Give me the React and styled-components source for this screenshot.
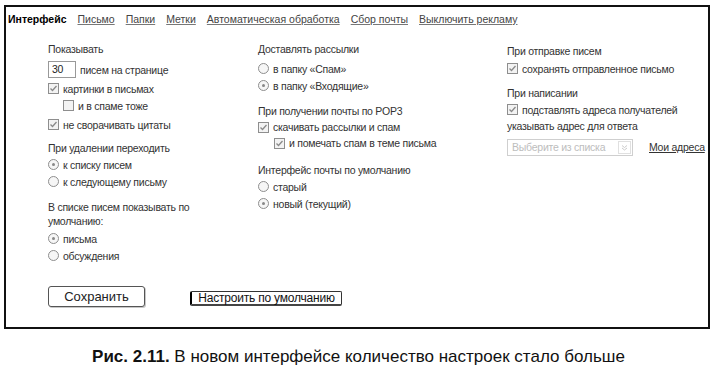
import React from 'react';
import styled, { createGlobalStyle } from 'styled-components';

const Global = createGlobalStyle`
  html, body { margin: 0; padding: 0; background: #fff; }
  body {
    font-family: "Liberation Sans", Arial, sans-serif;
    font-size: 10.5px;
    letter-spacing: -0.25px;
    color: #333;
    width: 717px;
    height: 374px;
    overflow: hidden;
  }
`;

const Frame = styled.div`
  box-sizing: border-box;
  margin: 5px 7px 0 4px;
  height: 324px;
  border: 2px solid #111;
`;

const Tabs = styled.nav`
  display: flex;
  gap: 11px;
  padding: 5px 0 0 2px;
  height: 14px;
  line-height: 14px;
  letter-spacing: 0;
  white-space: nowrap;
`;

const Tab = styled.a`
  color: ${(p) => (p.$active ? '#000' : '#444')};
  font-weight: ${(p) => (p.$active ? 700 : 400)};
  text-decoration: ${(p) => (p.$active ? 'none' : 'underline')};
  text-decoration-color: #777;
  cursor: pointer;
`;

const Columns = styled.div`
  display: grid;
  grid-template-columns: 210px 249px 1fr;
  padding: 16px 0 0 42px;
`;

const Column = styled.div`
  display: flex;
  flex-direction: column;
`;

const Heading = styled.div`
  line-height: ${(p) => p.$lh || 15}px;
  margin-top: ${(p) => p.$mt || 0}px;
  color: #333;
  white-space: nowrap;
`;

const Row = styled.label`
  display: flex;
  align-items: center;
  gap: 4px;
  height: ${(p) => p.$h || 17}px;
  margin-top: ${(p) => p.$mt || 0}px;
  padding-left: ${(p) => p.$indent || 0}px;
  white-space: nowrap;
`;

const Box = styled.span`
  box-sizing: border-box;
  width: 11px;
  height: 11px;
  border: 1px solid #8e8e8e;
  background: #f3f3f3;
  display: inline-flex;
  align-items: center;
  justify-content: center;
  flex: none;
`;

const Round = styled(Box)`
  border-radius: 50%;
  background: #f6f6f6;
  &::after {
    content: '';
    width: 3px;
    height: 3px;
    border-radius: 50%;
    background: ${(p) => (p.$on ? '#888' : 'transparent')};
  }
`;

const Check = ({ on }) => (
  <Box>
    {on && (
      <svg width="9" height="9" viewBox="0 0 9 9">
        <path d="M1.5 4.5 L3.5 6.5 L7.5 2" fill="none" stroke="#8a8a8a" strokeWidth="1.3" />
      </svg>
    )}
  </Box>
);

const InputRow = styled.div`
  display: flex;
  align-items: center;
  gap: 4px;
  height: 19px;
  margin-top: 3px;
  white-space: nowrap;
`;

const NumInput = styled.span`
  box-sizing: border-box;
  width: 28px;
  height: 17px;
  border: 1px solid #999;
  padding-left: 3px;
  line-height: 15px;
  color: #222;
`;

const SelectRow = styled.div`
  display: flex;
  align-items: center;
  gap: 16px;
  margin-top: 4px;
  height: 18px;
  white-space: nowrap;
`;

const Select = styled.div`
  box-sizing: border-box;
  width: 126px;
  height: 17px;
  border: 1px solid #cfcfcf;
  display: flex;
  align-items: center;
  justify-content: space-between;
  padding-left: 4px;
  color: #bdbdbd;
  overflow: hidden;
  white-space: nowrap;
  flex: none;
`;

const SelectArrow = styled.span`
  box-sizing: border-box;
  width: 13px;
  height: 13px;
  margin-right: 1px;
  border: 1px solid #e0e0e0;
  display: inline-flex;
  align-items: center;
  justify-content: center;
  flex: none;
`;

const LinkText = styled.a`
  color: #333;
  text-decoration: underline;
`;

const Buttons = styled.div`
  display: flex;
  align-items: flex-start;
  gap: 45px;
  padding: 22px 0 0 42px;
`;

const SaveButton = styled.button`
  box-sizing: border-box;
  width: 97px;
  height: 21px;
  border: 1px solid #555;
  border-radius: 3px;
  background: #fff;
  font-family: "Liberation Sans", Arial, sans-serif;
  font-size: 13px;
  color: #222;
  padding: 0;
  box-shadow: 1px 1px 0 #c8c8c8;
`;

const DefaultButton = styled.button`
  box-sizing: border-box;
  width: 152px;
  height: 15px;
  margin-top: 5px;
  border: 1px solid #333;
  border-left: 2px solid #000;
  border-bottom: 2px solid #444;
  border-radius: 2px;
  background: #fff;
  font-family: "Liberation Sans", Arial, sans-serif;
  font-size: 12px;
  letter-spacing: -0.2px;
  line-height: 11px;
  color: #111;
  padding: 0;
`;

const Caption = styled.p`
  margin: 18px 0 0;
  text-align: center;
  font-family: "Liberation Sans", Arial, sans-serif;
  font-size: 17px;
  letter-spacing: 0;
  line-height: 20px;
  color: #111;
  b { font-weight: 700; }
`;

export default function App() {
  return (
    <>
      <Global />
      <Frame>
        <Tabs>
          <Tab $active>Интерфейс</Tab>
          <Tab>Письмо</Tab>
          <Tab>Папки</Tab>
          <Tab>Метки</Tab>
          <Tab>Автоматическая обработка</Tab>
          <Tab>Сбор почты</Tab>
          <Tab>Выключить рекламу</Tab>
        </Tabs>
        <Columns>
          <Column>
            <Heading>Показывать</Heading>
            <InputRow>
              <NumInput>30</NumInput>
              <span>писем на странице</span>
            </InputRow>
            <Row $mt={1}><Check on />картинки в письмах</Row>
            <Row $indent={15}><Check />и в спаме тоже</Row>
            <Row $mt={2}><Check on />не сворачивать цитаты</Row>
            <Heading $mt={8}>При удалении переходить</Heading>
            <Row><Round $on />к списку писем</Row>
            <Row><Round />к следующему письму</Row>
            <Heading $mt={10} $lh={14}>В списке писем показывать по<br />умолчанию:</Heading>
            <Row $mt={2}><Round $on />письма</Row>
            <Row><Round />обсуждения</Row>
          </Column>
          <Column>
            <Heading>Доставлять рассылки</Heading>
            <Row $mt={3}><Round />в папку «Спам»</Row>
            <Row><Round $on />в папку «Входящие»</Row>
            <Heading $mt={10}>При получении почты по POP3</Heading>
            <Row $h={16}><Check on />скачивать рассылки и спам</Row>
            <Row $h={16} $indent={16}><Check on />и помечать спам в теме письма</Row>
            <Heading $mt={12}>Интерфейс почты по умолчанию</Heading>
            <Row><Round />старый</Row>
            <Row><Round $on />новый (текущий)</Row>
          </Column>
          <Column>
            <Heading $mt={2}>При отправке писем</Heading>
            <Row $mt={1}><Check on />сохранять отправленное письмо</Row>
            <Heading $mt={9}>При написании</Heading>
            <Row><Check on />подставлять адреса получателей</Row>
            <Heading $mt={1}>указывать адрес для ответа</Heading>
            <SelectRow>
              <Select>
                <span>Выберите из списка</span>
                <SelectArrow>
                  <svg width="7" height="7" viewBox="0 0 7 7">
                    <path d="M1 1.5 L3.5 3.5 L6 1.5 M1 4 L3.5 6 L6 4" fill="none" stroke="#ccc" strokeWidth="1" />
                  </svg>
                </SelectArrow>
              </Select>
              <LinkText>Мои адреса</LinkText>
            </SelectRow>
          </Column>
        </Columns>
        <Buttons>
          <SaveButton>Сохранить</SaveButton>
          <DefaultButton>Настроить по умолчанию</DefaultButton>
        </Buttons>
      </Frame>
      <Caption>
        <b>Рис. 2.11.</b> В новом интерфейсе количество настроек стало больше
      </Caption>
    </>
  );
}
